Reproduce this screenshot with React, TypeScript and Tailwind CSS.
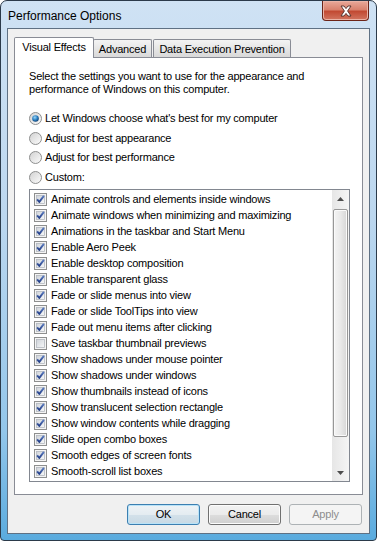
import React from 'react';

const effects: { label: string; checked: boolean }[] = [
  { label: 'Animate controls and elements inside windows', checked: true },
  { label: 'Animate windows when minimizing and maximizing', checked: true },
  { label: 'Animations in the taskbar and Start Menu', checked: true },
  { label: 'Enable Aero Peek', checked: true },
  { label: 'Enable desktop composition', checked: true },
  { label: 'Enable transparent glass', checked: true },
  { label: 'Fade or slide menus into view', checked: true },
  { label: 'Fade or slide ToolTips into view', checked: true },
  { label: 'Fade out menu items after clicking', checked: true },
  { label: 'Save taskbar thumbnail previews', checked: false },
  { label: 'Show shadows under mouse pointer', checked: true },
  { label: 'Show shadows under windows', checked: true },
  { label: 'Show thumbnails instead of icons', checked: true },
  { label: 'Show translucent selection rectangle', checked: true },
  { label: 'Show window contents while dragging', checked: true },
  { label: 'Slide open combo boxes', checked: true },
  { label: 'Smooth edges of screen fonts', checked: true },
  { label: 'Smooth-scroll list boxes', checked: true },
];

const Checkbox: React.FC<{ checked: boolean }> = ({ checked }) => (
  <svg width="13" height="13" viewBox="0 0 13 13" className="shrink-0">
    <defs>
      <linearGradient id="cbfill" x1="0" y1="0" x2="1" y2="1">
        <stop offset="0" stopColor="#cfd3d9" />
        <stop offset="1" stopColor="#f7f8f9" />
      </linearGradient>
      <linearGradient id="cbcheck" x1="0" y1="0" x2="0" y2="1">
        <stop offset="0" stopColor="#5b7cc0" />
        <stop offset="1" stopColor="#26418a" />
      </linearGradient>
    </defs>
    <rect x="0.5" y="0.5" width="12" height="12" fill="#f4f4f4" stroke="#8e8f8f" />
    <rect x="2.5" y="2.5" width="8" height="8" fill="url(#cbfill)" stroke="#b4b9c0" strokeWidth="0.8" />
    {checked && (
      <path d="M3.1 6.3 L5.3 8.9 L9.9 2.9" fill="none" stroke="url(#cbcheck)" strokeWidth="1.9" strokeLinejoin="round" />
    )}
  </svg>
);

const Radio: React.FC<{ checked?: boolean }> = ({ checked }) => (
  <svg width="13" height="13" viewBox="0 0 13 13" className="shrink-0">
    <defs>
      <linearGradient id="rdfill" x1="0" y1="0" x2="1" y2="1">
        <stop offset="0" stopColor="#d0d0d0" />
        <stop offset="1" stopColor="#fdfdfd" />
      </linearGradient>
      <radialGradient id="rddot" cx="0.4" cy="0.35" r="0.7">
        <stop offset="0" stopColor="#9ad6f7" />
        <stop offset="0.55" stopColor="#2b7fc2" />
        <stop offset="1" stopColor="#0f3967" />
      </radialGradient>
    </defs>
    <circle cx="6.5" cy="6.5" r="6" fill="url(#rdfill)" stroke="#8e8f8f" />
    {checked && <circle cx="6.5" cy="6.5" r="3.3" fill="url(#rddot)" />}
  </svg>
);

const Button: React.FC<{ label: string; primary?: boolean; disabled?: boolean }> = ({ label, primary, disabled }) => (
  <div
    className={
      'flex h-[21px] w-[73px] items-center justify-center rounded-[3px] border ' +
      (disabled
        ? 'border-[#adb2b5] bg-[#f4f4f4] text-[#8d8d8d]'
        : primary
        ? 'border-[#3c7fb1] bg-[linear-gradient(to_bottom,#eef3f6_0%,#e4ecf1_50%,#d3e1ea_51%,#c8d9e4_100%)] text-black shadow-[inset_0_0_0_1px_#b9e3f8]'
        : 'border-[#707070] bg-[linear-gradient(to_bottom,#f2f2f2_0%,#ebebeb_50%,#dddddd_51%,#cfcfcf_100%)] text-black shadow-[inset_0_0_0_1px_#fcfcfc]')
    }
  >
    {label}
  </div>
);

export default function App() {
  return (
    <div className="h-[541px] w-[377px] bg-white font-['Liberation_Sans',Arial,sans-serif] text-[11px] tracking-[-0.2px] text-black">
      <div className="relative flex h-[541px] w-[377px] flex-col rounded-t-[7px] rounded-b-[4px] border border-[#2b3a4a] bg-[linear-gradient(to_bottom,#cfe2f4_0%,#bcd7ef_40%,#93c6ea_80%,#5aabde_100%)] px-[6px] pb-[6px]">
        {/* title bar */}
        <div className="flex h-[27px] items-center pl-[1px] pt-[2px] text-[12px] leading-none tracking-normal">Performance Options</div>
        <div className="absolute right-[7px] top-0 flex h-[20px] w-[47px] items-center justify-center rounded-b-[4px] border border-t-0 border-[#6b2418] bg-[linear-gradient(to_bottom,#e9a99a_0%,#d9826e_45%,#c24a33_55%,#d27560_100%)] shadow-[inset_0_0_0_1px_#eab3a6]">
          <svg width="14" height="12" viewBox="0 0 14 12">
            <path
              d="M2 1 L5 1 L7 3.6 L9 1 L12 1 L8.6 6 L12 11 L9 11 L7 8.4 L5 11 L2 11 L5.4 6 Z"
              fill="#ffffff"
              stroke="#4d2a26"
              strokeWidth="0.9"
              strokeLinejoin="round"
            />
          </svg>
        </div>

        {/* client area */}
        <div className="flex flex-1 flex-col border border-[#5f7184] bg-[#f0f0f0] px-[6px] pt-[8px]">
          {/* tabs */}
          <div className="flex h-[20px] items-end">
            <div className="relative z-10 -mb-px flex h-[21px] w-[80px] items-center justify-center rounded-t-[2px] border border-b-0 border-[#898c95] bg-white pb-[1px]">
              Visual Effects
            </div>
            <div className="-ml-px flex h-[18px] w-[59px] items-center justify-center rounded-t-[2px] border border-b-0 border-[#898c95] bg-[linear-gradient(to_bottom,#f3f3f3,#d9d9d9)] pt-[1px]">
              Advanced
            </div>
            <div className="ml-px flex h-[18px] w-[138px] items-center justify-center rounded-t-[2px] border border-b-0 border-[#898c95] bg-[linear-gradient(to_bottom,#f3f3f3,#d9d9d9)] pt-[1px]">
              Data Execution Prevention
            </div>
          </div>

          {/* panel */}
          <div className="flex h-[438px] flex-col border border-[#898c95] bg-white pl-[14px] pr-[12px] pt-[12px]">
            <p className="leading-[13px]">
              Select the settings you want to use for the appearance and
              <br />
              performance of Windows on this computer.
            </p>
            <div className="mt-[12px] flex flex-col">
              <div className="flex h-[20px] items-center gap-[3px]">
                <Radio checked />
                <span>Let Windows choose what's best for my computer</span>
              </div>
              <div className="flex h-[20px] items-center gap-[3px]">
                <Radio />
                <span>Adjust for best appearance</span>
              </div>
              <div className="flex h-[19px] items-center gap-[3px]">
                <Radio />
                <span>Adjust for best performance</span>
              </div>
              <div className="flex h-[20px] items-center gap-[3px]">
                <Radio />
                <span>Custom:</span>
              </div>
            </div>

            {/* list box */}
            <div className="mt-[2px] flex h-[293px] w-[321px] border border-[#828790] bg-white">
              <div className="flex flex-1 flex-col pt-[1px]">
                {effects.map((e) => (
                  <div key={e.label} className="flex h-[16px] items-center gap-[4px] pl-[4px]">
                    <Checkbox checked={e.checked} />
                    <span className="whitespace-nowrap">{e.label}</span>
                  </div>
                ))}
              </div>
              {/* scrollbar */}
              <div className="flex w-[17px] flex-col bg-[linear-gradient(to_right,#e6e6e6,#f5f5f5)]">
                <div className="flex h-[18px] items-center justify-center">
                  <svg width="7" height="4" viewBox="0 0 7 4">
                    <path d="M0 4 L3.5 0 L7 4 Z" fill="#4d4d4d" />
                  </svg>
                </div>
                <div className="mx-[1px] mt-[1px] h-[228px] rounded-[2px] border border-[#979797] bg-[linear-gradient(to_right,#f4f4f4,#e9e9e9_50%,#d6d6d6)] shadow-[inset_0_0_0_1px_#fafafa]" />
                <div className="flex-1" />
                <div className="flex h-[17px] items-center justify-center">
                  <svg width="7" height="4" viewBox="0 0 7 4">
                    <path d="M0 0 L7 0 L3.5 4 Z" fill="#4d4d4d" />
                  </svg>
                </div>
              </div>
            </div>
          </div>

          {/* buttons */}
          <div className="mt-[9px] flex justify-end gap-[8px] pr-[1px]">
            <Button label="OK" primary />
            <Button label="Cancel" />
            <Button label="Apply" disabled />
          </div>
        </div>
      </div>
    </div>
  );
}
